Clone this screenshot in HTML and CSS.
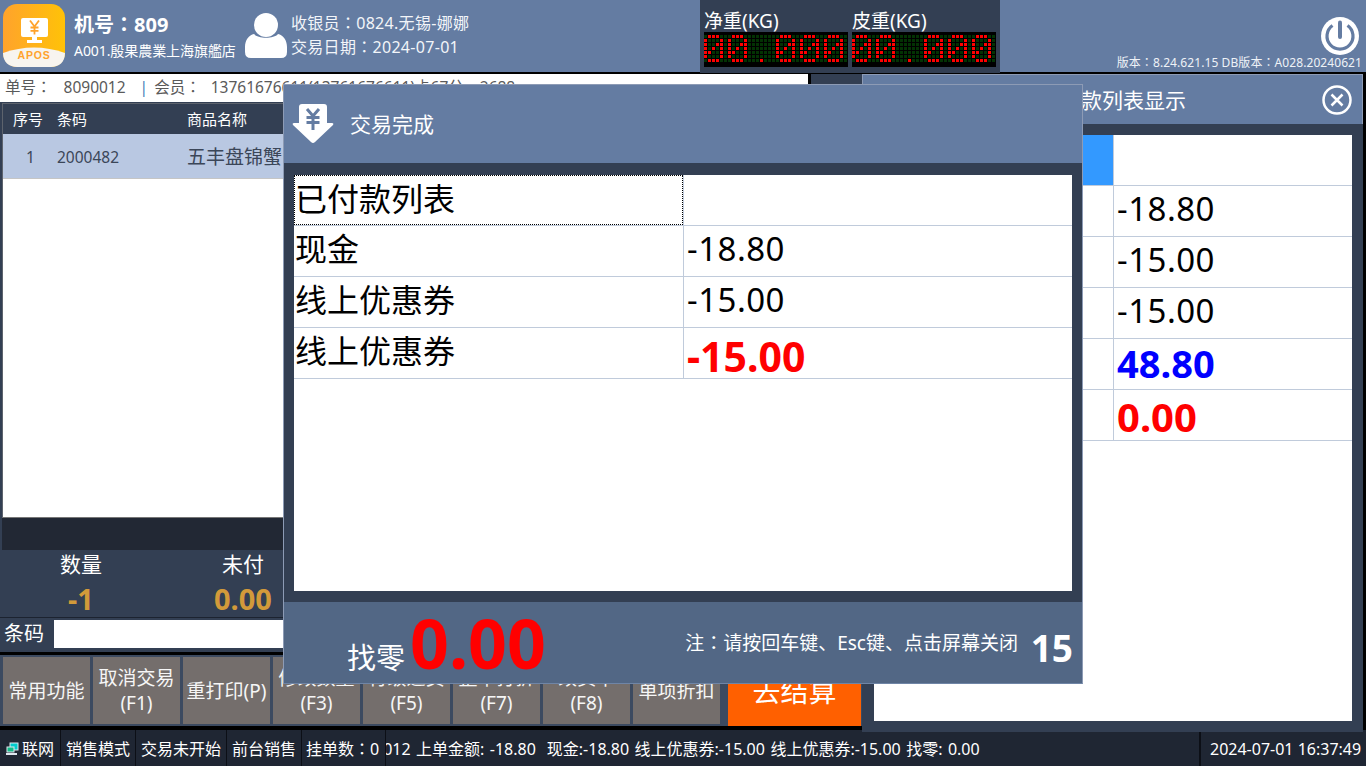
FILE: index.html
```html
<!DOCTYPE html>
<html lang="zh-CN">
<head>
<meta charset="utf-8">
<title>APOS</title>
<link rel="stylesheet" href="styles.css">
</head>
<body>
<svg class="defs" width="0" height="0" aria-hidden="true">
  <defs>
    <pattern id="led-cell" width="4" height="4" patternUnits="userSpaceOnUse"><rect width="3" height="3" fill="#033203"/></pattern>
    <path id="led-zero" d="M4 0h3v3h-3zM8 0h3v3h-3zM12 0h3v3h-3zM0 4h3v3h-3zM16 4h3v3h-3zM0 8h3v3h-3zM12 8h3v3h-3zM16 8h3v3h-3zM0 12h3v3h-3zM8 12h3v3h-3zM16 12h3v3h-3zM0 16h3v3h-3zM4 16h3v3h-3zM16 16h3v3h-3zM0 20h3v3h-3zM16 20h3v3h-3zM4 24h3v3h-3zM8 24h3v3h-3zM12 24h3v3h-3z"/>
    <g id="led-display">
      <rect width="144" height="35" fill="#000"/>
      <g transform="translate(0 3)" fill="#f00">
        <rect width="144" height="28" fill="url(#led-cell)"/>
        <use href="#led-zero"/>
        <use href="#led-zero" x="24"/>
        <rect x="56" y="24" width="3" height="3"/>
        <use href="#led-zero" x="72"/>
        <use href="#led-zero" x="96"/>
        <use href="#led-zero" x="120"/>
      </g>
    </g>
  </defs>
</svg>

<div class="app">
  <header class="topbar">
    <div class="brand">
      <svg class="logo" width="62" height="63" viewBox="0 0 62 63">
        <defs><linearGradient id="logo-fill" x1="0" x2="1" y1="0" y2="0"><stop offset="0" stop-color="#ffa32c"/><stop offset="1" stop-color="#ffc208"/></linearGradient></defs>
        <rect width="62" height="63" rx="14" fill="url(#logo-fill)"/>
        <path d="M0 49Q31 38 62 49C62 58 56 63 48 63H14C6 63 0 58 0 49Z" fill="#f7f4ef"/>
        <rect x="18" y="14" width="27" height="19" rx="2" fill="#fff"/>
        <path d="M29 33h5v3h5v3H24v-3h5z" fill="#fff"/>
        <path d="M27 16.500l4.500 6 4.500-6M31.500 22.500V30.500M27.500 23.500h8M27.500 26.800h8" fill="none" stroke="#ffa32c" stroke-width="1.800"/>
        <text class="logo-text" x="31" y="54.500" text-anchor="middle">APOS</text>
      </svg>
      <div class="store">
        <div class="store-no">机号<span class="colon" lang="zh-TW">：</span>809</div>
        <div class="store-name">A001.殷果農業上海旗艦店</div>
      </div>
    </div>
    <div class="cashier">
      <svg class="person" width="42" height="46" viewBox="0 0 42 46">
        <circle cx="21" cy="12" r="12" fill="#fff"/>
        <path d="M9 21C13 26 29 26 33 21 38 22 42 27 42 34V39Q42 45 36 45H6Q0 45 0 39V34C0 27 4 22 9 21Z" fill="#fff"/>
      </svg>
      <div class="cashier-info">
        <div>收银员<span class="colon" lang="zh-TW">：</span>0824.无锡-娜娜</div>
        <div>交易日期<span class="colon" lang="zh-TW">：</span>2024-07-01</div>
      </div>
    </div>
    <div class="scales">
      <div class="scale">
        <div class="scale-label">净重(KG)</div>
        <svg class="led" width="144" height="35" viewBox="0 0 144 35"><use href="#led-display"/></svg>
      </div>
      <div class="scale">
        <div class="scale-label">皮重(KG)</div>
        <svg class="led" width="144" height="35" viewBox="0 0 144 35"><use href="#led-display"/></svg>
      </div>
    </div>
    <div class="system">
      <svg class="power" width="40" height="40" viewBox="0 0 40 40">
        <circle cx="20" cy="20" r="19" fill="#fff"/>
        <path d="M12.500 9.500A13 13 0 1 0 27.500 9.500" fill="none" stroke="#647ca2" stroke-width="3.200"/>
        <path d="M20 6.500V21" stroke="#647ca2" stroke-width="4" stroke-linecap="round"/>
      </svg>
      <div class="version">版本<span class="colon" lang="zh-TW">：</span>8.24.621.15 DB版本<span class="colon" lang="zh-TW">：</span>A028.20240621</div>
    </div>
  </header>

  <main class="workspace">
    <section class="sale">
      <div class="order-line">
        <span class="order-key">单号<span class="colon" lang="zh-TW">：</span></span><span class="order-no">8090012</span><span class="order-sep">|</span><span class="order-key">会员<span class="colon" lang="zh-TW">：</span></span><span class="order-member">13761676611(13761676611)卡67分</span><span class="order-points">2688</span>
      </div>
      <div class="items">
        <div class="items-head item-cols">
          <span>序号</span><span>条码</span><span>商品名称</span>
        </div>
        <div class="item-row item-cols">
          <span class="item-index">1</span><span>2000482</span><span class="item-name">五丰盘锦蟹</span>
        </div>
      </div>
      <div class="items-foot"></div>
      <div class="totals">
        <div class="total"><div class="total-label">数量</div><div class="total-value">-1</div></div>
        <div class="total"><div class="total-label">未付</div><div class="total-value">0.00</div></div>
      </div>
    </section>
    <div class="barcode">
      <label class="barcode-label">条码</label>
      <div class="barcode-input"></div>
    </div>
    <div class="actions">
      <div class="action">常用功能</div>
      <div class="action">取消交易<br>(F1)</div>
      <div class="action">重打印(P)</div>
      <div class="action">修改数量<br>(F3)</div>
      <div class="action">行级退货<br>(F5)</div>
      <div class="action">整单打折<br>(F7)</div>
      <div class="action">改卖本<br>(F8)</div>
      <div class="action">单项折扣</div>
      <div class="checkout">去结算</div>
    </div>
  </main>

  <footer class="statusbar">
    <div class="status status-net">
      <svg width="14" height="14" viewBox="0 0 14 14"><rect x="5" y="1" width="8" height="7" fill="#0cc"/><rect x="5" y="1" width="8" height="7" fill="none" stroke="#dfe6ee"/><rect x="2" y="5" width="7" height="5" fill="#1b8" stroke="#dfe6ee"/><rect x="1" y="11" width="11" height="2" fill="#dfe6ee"/></svg>
      <span>联网</span>
    </div>
    <div class="status status-mode">销售模式</div>
    <div class="status status-trade">交易未开始</div>
    <div class="status status-desk">前台销售</div>
    <div class="status status-hold">挂单数<span class="colon" lang="zh-TW">：</span>0</div>
    <div class="status status-log"><span class="log-text">0012 上单金额: -18.80&nbsp; 现金:-18.80 线上优惠券:-15.00 线上优惠券:-15.00 找零: 0.00</span></div>
    <div class="status status-time">2024-07-01 16:37:49</div>
  </footer>
</div>

<aside class="modal modal-list">
  <div class="list-head">
    <div class="list-title">已付款列表显示</div>
    <svg class="close" width="30" height="30" viewBox="0 0 30 30">
      <circle cx="15" cy="15" r="13.500" fill="none" stroke="#fff" stroke-width="2.500"/>
      <path d="M9.500 9.500L20.500 20.500M20.500 9.500L9.500 20.500" stroke="#fff" stroke-width="2.500"/>
    </svg>
  </div>
  <div class="list-body">
    <div class="list-table">
      <div class="list-row list-row-head"><div class="list-key"></div><div></div></div>
      <div class="list-row"><div class="list-key">现金</div><div class="list-val">-18.80</div></div>
      <div class="list-row"><div class="list-key">线上优惠券</div><div class="list-val">-15.00</div></div>
      <div class="list-row"><div class="list-key">线上优惠券</div><div class="list-val">-15.00</div></div>
      <div class="list-row"><div class="list-key">合计</div><div class="list-val list-blue">48.80</div></div>
      <div class="list-row"><div class="list-key">找零</div><div class="list-val list-red">0.00</div></div>
    </div>
  </div>
</aside>

<section class="modal modal-done">
  <div class="done-head">
    <svg class="done-icon" width="42" height="40" viewBox="0 0 42 40">
      <path d="M10 0H32Q35 0 35 3V19H40Q42 19 41 21L23 38Q21 40 19 38L1 21Q0 19 2 19H7V3Q7 0 10 0Z" fill="#fff"/>
      <path d="M15 5l6 7 6-7M21 12V26M14.500 13.500h13M14.500 18.500h13" fill="none" stroke="#647ca2" stroke-width="3"/>
    </svg>
    <div class="done-title">交易完成</div>
  </div>
  <div class="done-body">
    <div class="pay-table">
      <div class="pay-row"><div class="pay-key pay-focus">已付款列表</div><div class="pay-val"></div></div>
      <div class="pay-row"><div class="pay-key">现金</div><div class="pay-val">-18.80</div></div>
      <div class="pay-row"><div class="pay-key">线上优惠券</div><div class="pay-val">-15.00</div></div>
      <div class="pay-row"><div class="pay-key">线上优惠券</div><div class="pay-val pay-red">-15.00</div></div>
    </div>
  </div>
  <div class="done-foot">
    <span class="change-label">找零</span>
    <span class="change-value">0.00</span>
    <span class="foot-note">注<span class="colon" lang="zh-TW">：</span>请按回车键、Esc键、点击屏幕关闭</span>
    <span class="foot-count">15</span>
  </div>
</section>
</body>
</html>
```
FILE: styles.css
```css
* { box-sizing: border-box; }
html, body { margin: 0; padding: 0; width: 1366px; height: 766px; overflow: hidden; background: #000; }
body { font-family: "Noto Sans", "Noto Sans CJK SC", sans-serif; position: relative; color: #fff; }
.defs { position: absolute; }
.app { display: flex; flex-direction: column; width: 1366px; height: 766px; }
.colon { font-family: "Noto Sans CJK TC", sans-serif; line-height: 1; }

/* top bar */
.topbar { display: flex; height: 72px; flex: none; background: #647ca2; }
.brand { display: flex; width: 245px; padding: 4px 0 0 3px; }
.logo { flex: none; }
.logo-text { font: bold 10.500px "Liberation Sans", sans-serif; letter-spacing: .8px; fill: #ffa32c; }
.store { margin-left: 9px; white-space: nowrap; }
.store-no { font-size: 20px; font-weight: 700; line-height: 26px; margin-top: 8px; }
.store-name { font-size: 14px; line-height: 20px; margin-top: 3px; letter-spacing: -.07px; }
.cashier { display: flex; width: 455px; padding-top: 13px; }
.person { flex: none; }
.cashier-info { margin: -2px 0 0 4px; font-size: 16px; line-height: 24px; color: #f2f5f9; letter-spacing: .3px; }
.scales { display: flex; flex: none; width: 300px; height: 73px; padding-left: 4px; gap: 4px; background: #333f53; }
.scale-label { height: 24px; padding-top: 1px; font-size: 19px; line-height: 24px; margin-top: 8px; }
.led { display: block; }
.system { flex: 1; display: flex; flex-direction: column; align-items: flex-end; padding: 16px 4px 0 0; }
.power { margin-right: 2px; }
.version { font-size: 12px; line-height: 14px; letter-spacing: .08px; white-space: nowrap; color: #eef2f7; }

/* main */
.workspace { flex: none; width: 862px; height: 656px; margin-top: 2px; background: #333f53; }
.sale { width: 811px; height: 544px; border-right: 3px solid #000; display: flex; flex-direction: column; }
.order-line { height: 28px; background: #fff; color: #5a5a5a; font-size: 15.500px; line-height: 27px; padding-left: 5px; white-space: nowrap; overflow: hidden; flex: none; }
.order-no { margin: 0 14px 0 12px; }
.order-sep { color: #4a80b8; margin-right: 6px; }
.order-member { margin-left: 10px; }
.order-points { margin-left: 16px; }
.items { flex: 1; margin: 1px 0 0 2px; background: #fff; border-top: 1px solid #5d636d; border-left: 1px solid #5d636d; border-bottom: 1px solid #777; }
.item-cols { display: grid; grid-template-columns: 44px 130px 1fr; padding-left: 10px; }
.items-head { height: 30px; background: #333f53; font-size: 15px; line-height: 30px; }
.item-row { height: 45px; padding-top: 1px; background: #b9c8e2; border-bottom: 1px solid #c5c5c5; color: #3b4658; font-size: 15.500px; line-height: 44px; }
.item-index { padding-left: 13px; }
.item-name { font-size: 19px; }
.items-foot { height: 32px; flex: none; margin-left: 2px; background: #222834; }
.totals { flex: none; height: 68px; display: grid; grid-template-columns: 162px 162px; border-bottom: 1px solid #1c2330; text-align: center; }
.total-label { font-size: 21px; line-height: 28px; }
.total-value { font-size: 29px; font-weight: 700; line-height: 34px; margin-top: 4px; color: #d29a3a; }

.barcode { display: flex; align-items: center; height: 37px; padding: 2px 0 4px 4px; border-bottom: 3px solid #000; }
.barcode-label { font-size: 20px; line-height: 28px; width: 50px; flex: none; }
.barcode-input { flex: 1; height: 28px; background: #fff; }
.actions { display: flex; align-items: flex-start; height: 75px; padding: 2px 1px 0 3px; gap: 3px; background: #3c4a60; border-bottom: 4px solid #000; }
.action { width: 87px; height: 67px; flex: none; padding-top: 1px; background: #746e6c; display: flex; align-items: center; justify-content: center; text-align: center; font-size: 19px; line-height: 25px; color: #f6f6f6; white-space: nowrap; }
.checkout { width: 133px; height: 69px; flex: none; margin-left: 5px; background: #ff6000; text-align: center; font-size: 28px; line-height: 69px; }

/* status */
.statusbar { flex: 1; display: flex; background: #1f2633; font-size: 16px; line-height: 36px; white-space: nowrap; }
.status { border-right: 1px solid #0c0f16; padding: 1px 0 0 5px; overflow: hidden; flex: none; }
.status-net { width: 61px; display: flex; align-items: center; gap: 3px; }
.status-mode { width: 75px; }
.status-trade { width: 91px; }
.status-desk { width: 75px; }
.status-hold { width: 84px; padding-left: 4px; }
.status-log { width: 814px; padding-left: 0; }
.log-text { display: inline-block; margin-left: -12px; word-spacing: 1.300px; }
.status-time { flex: 1; border-right: 0; padding-left: 9px; border-left: 1px solid #0c0f16; }

/* dialogs */
.modal { position: absolute; }
.modal-list { left: 862px; top: 74px; width: 501px; height: 658px; background: #333f53; display: flex; flex-direction: column; }
.list-head { position: relative; height: 50px; flex: none; background: #647ca2; border: 1px solid #8d9bb5; border-bottom: 0; text-align: center; font-size: 21px; line-height: 50px; }
.close { position: absolute; right: 10px; top: 10px; }
.list-body { flex: 1; padding: 11px 11px 11px 12px; }
.list-table { height: 100%; background: #fff; }
.list-row { display: grid; grid-template-columns: 240px 1fr; grid-template-rows: 100%; height: 51px; border-bottom: 1px solid #c0cbdb; color: #000; font-size: 33px; line-height: 46px; letter-spacing: .5px; }
.list-row-head .list-key { background: #39f; }
.list-key { border-right: 1px solid #c0cbdb; padding-left: 3px; }
.list-val { padding-left: 3px; }
.list-blue { color: #00f; font-weight: 700; font-size: 38px; line-height: 48px; letter-spacing: 0; }
.list-red { color: #f00; font-weight: 700; font-size: 40px; line-height: 54px; letter-spacing: 0; }

.modal-done { left: 283px; top: 84px; width: 800px; height: 600px; display: flex; flex-direction: column; background: #333f53; border: 1px solid #8d9bb5; border-bottom-color: #6f85a6; }
.done-head { display: flex; align-items: center; height: 78px; flex: none; background: #647ca2; padding-left: 8px; }
.done-icon { flex: none; }
.done-title { margin: -2px 0 0 16px; font-size: 21px; }
.done-body { flex: 1; padding: 12px 10px 11px; }
.pay-table { height: 100%; background: #fff; }
.pay-row { display: grid; grid-template-columns: 389px 1fr; grid-template-rows: 100%; height: 51px; border-bottom: 1px solid #c0cbdb; color: #000; font-size: 32px; line-height: 46px; }
.pay-key { padding-left: 1px; }
.pay-focus { outline: 1px dotted #000; outline-offset: -1px; line-height: 48px; }
.pay-val { border-left: 1px solid #c0cbdb; padding-left: 3px; font-size: 33px; letter-spacing: .5px; }
.pay-red { color: #f00; font-weight: 700; font-size: 41px; line-height: 56px; letter-spacing: 0; }
.done-foot { display: flex; align-items: flex-end; height: 81px; flex: none; background: #526785; padding-left: 63px; white-space: nowrap; position: relative; }
.change-label { font-size: 29px; line-height: 40px; margin-bottom: 5px; }
.change-value { color: #f00; font-size: 68px; font-weight: 700; line-height: 80px; margin-left: 5px; }
.foot-note { position: absolute; right: 64px; top: 27px; font-size: 19px; line-height: 28px; }
.foot-count { position: absolute; right: 9px; top: 21px; font-size: 37px; font-weight: 700; line-height: 50px; }
```
